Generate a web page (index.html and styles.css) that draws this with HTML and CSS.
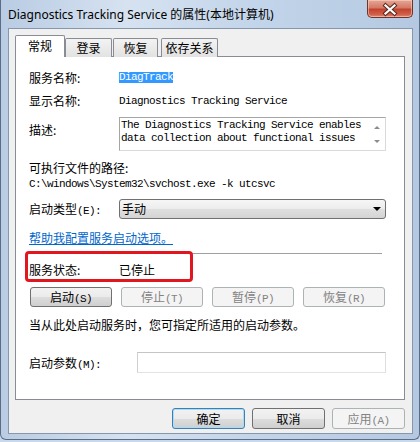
FILE: index.html
```html
<!DOCTYPE html>
<html lang="zh-CN">
<head>
  <meta charset="UTF-8">
  <title>Diagnostics Tracking Service 的属性(本地计算机)</title>
  <link rel="stylesheet" href="styles.css">
</head>
<body>
  <div class="window">
    <div class="titlebar">
      <span class="title">Diagnostics Tracking Service 的属性(本地计算机)</span>
      <button class="close" aria-label="关闭">
        <svg width="44" height="16" viewBox="0 0 44 16">
          <path d="M17.5 4.5 L26.5 12.5 M26.5 4.5 L17.5 12.5" stroke="#5a2b24" stroke-width="4.2" stroke-linecap="square"/>
          <path d="M17.5 4.5 L26.5 12.5 M26.5 4.5 L17.5 12.5" stroke="#ffffff" stroke-width="2.2" stroke-linecap="square"/>
        </svg>
      </button>
    </div>

    <div class="client">
      <div class="tabs">
        <div class="tab active t-general">常规</div>
        <div class="tab t-logon">登录</div>
        <div class="tab t-recovery">恢复</div>
        <div class="tab t-deps">依存关系</div>
      </div>

      <div class="panel">
        <div class="field">
          <span class="label">服务名称:</span>
          <span class="mono"><span class="selected">DiagTrack</span></span>
        </div>
        <div class="field gap-3">
          <span class="label">显示名称:</span>
          <span class="mono">Diagnostics Tracking Service</span>
        </div>
        <div class="field desc">
          <span class="label">描述:</span>
          <div class="textbox">
            <div class="text mono">The Diagnostics Tracking Service enables<br>data collection about functional issues</div>
            <div class="scroll">
              <span class="arrow-up"></span>
              <span class="arrow-down"></span>
            </div>
          </div>
        </div>
        <div class="heading">可执行文件的路径:</div>
        <div class="path mono">C:\windows\System32\svchost.exe -k utcsvc</div>
        <div class="field startup">
          <span class="label">启动类型<span class="mono">(E):</span></span>
          <div class="combo">
            <span>手动</span>
            <span class="combo-arrow"></span>
          </div>
        </div>
        <a class="help" href="#">帮助我配置服务启动选项。</a>
        <div class="separator"></div>
        <div class="field status">
          <span class="label">服务状态:</span>
          <span>已停止</span>
          <div class="mark"></div>
        </div>
        <div class="buttons">
          <button class="btn">启动<span class="mono">(S)</span></button>
          <button class="btn" disabled>停止<span class="mono">(T)</span></button>
          <button class="btn" disabled>暂停<span class="mono">(P)</span></button>
          <button class="btn" disabled>恢复<span class="mono">(R)</span></button>
        </div>
        <div class="note">当从此处启动服务时，您可指定所适用的启动参数。</div>
        <div class="field params">
          <span class="label wide">启动参数<span class="mono">(M):</span></span>
          <div class="input"></div>
        </div>
      </div>

      <div class="actions">
        <button class="btn small default">确定</button>
        <button class="btn small">取消</button>
        <button class="btn small" disabled>应用<span class="mono">(A)</span></button>
      </div>
    </div>
  </div>
</body>
</html>
```

FILE: styles.css
```css
* {
  box-sizing: border-box;
}
body {
  margin: 0;
  width: 420px;
  height: 442px;
  overflow: hidden;
  font-family: "Noto Sans CJK SC", sans-serif;
  font-size: 12px;
  color: #000;
  background: #c9d8ea;
}
.window {
  width: 420px;
  height: 440px;
  border: 1px solid #5a6d85;
  border-top: none;
  border-radius: 0 0 6px 6px;
  background: linear-gradient(90deg, #b9cce3 0%, #d6e2f0 30%, #c3d5ea 60%, #b4c9e1 100%);
}
.titlebar {
  display: flex;
  justify-content: space-between;
  align-items: flex-start;
  height: 28px;
  padding-right: 6px;
}
.title {
  padding: 6px 0 0 7px;
  line-height: 18px;
  font-family: "Noto Sans", "Noto Sans CJK SC", sans-serif;
  font-size: 12px;
  color: #000;
}
.close {
  width: 46px;
  height: 18px;
  padding: 0;
  border: 1px solid #6e3329;
  border-top: none;
  border-radius: 0 0 5px 5px;
  background: linear-gradient(#e6a796 0%, #d47a66 45%, #c2432e 55%, #d0604a 85%, #e08c72 100%);
  box-shadow: inset 0 0 0 1px rgba(255, 220, 210, 0.5);
}
.close svg {
  display: block;
}
.client {
  width: 405px;
  height: 406px;
  margin-left: 7px;
  border: 1px solid #8797ab;
  background: #f0f0f0;
  padding: 6px 0 0 6px;
}
.tabs {
  display: flex;
  align-items: flex-end;
  height: 22px;
}
.tab {
  height: 19px;
  border: 1px solid #898c95;
  border-bottom: none;
  border-radius: 2px 2px 0 0;
  background: linear-gradient(#f3f3f3, #e2e2e2);
  text-align: center;
  line-height: 18px;
}
.tab.active {
  height: 22px;
  line-height: 20px;
  background: #fff;
  position: relative;
  z-index: 1;
}
.t-general { width: 50px; }
.t-logon { width: 47px; }
.t-recovery { width: 45px; margin-left: 1px; }
.t-deps { width: 57px; margin-left: 3px; }
.panel {
  width: 390px;
  height: 344px;
  margin-top: -1px;
  border: 1px solid #898c95;
  background: #fff;
  padding: 11px 18px 0 13px;
}
.mono {
  font-family: "Liberation Mono", monospace;
  font-size: 11px;
  letter-spacing: -0.6px;
}
.field {
  display: flex;
  height: 20px;
  line-height: 20px;
}
.label {
  width: 90px;
  flex: none;
}
.label.wide {
  width: 108px;
}
.selected {
  display: inline-block;
  line-height: 11px;
  background: #3399ff;
  color: #fff;
  vertical-align: 1px;
}
.gap-3 {
  margin-top: 3px;
}
.desc {
  height: 34px;
  margin-top: 6px;
}
.desc .label {
  padding-top: 3px;
}
.textbox {
  display: flex;
  width: 267px;
  height: 34px;
  border: 1px solid;
  border-color: #a5a5a5 #dadada #dadada #a5a5a5;
}
.textbox .text {
  flex: 1;
  padding: 1px 1px;
  line-height: 13px;
}
.scroll {
  width: 17px;
  display: flex;
  flex-direction: column;
  justify-content: space-between;
  align-items: center;
  padding: 8px 0 7px;
}
.arrow-up {
  border-left: 3px solid transparent;
  border-right: 3px solid transparent;
  border-bottom: 3px solid #8c8c8c;
}
.arrow-down {
  border-left: 3px solid transparent;
  border-right: 3px solid transparent;
  border-top: 3px solid #8c8c8c;
}
.heading {
  margin-top: 8px;
  line-height: 17px;
}
.path {
  line-height: 16px;
}
.startup {
  margin-top: 7px;
}
.combo {
  display: flex;
  justify-content: space-between;
  align-items: center;
  width: 267px;
  height: 20px;
  padding: 0 4px 0 2px;
  border: 1px solid #707070;
  border-radius: 3px;
  background: linear-gradient(#f6f6f6 0%, #ececec 50%, #dfdfdf 51%, #d4d4d4 100%);
}
.combo-arrow {
  border-left: 4px solid transparent;
  border-right: 4px solid transparent;
  border-top: 4px solid #000;
}
.help {
  display: block;
  margin-top: 9px;
  line-height: 20px;
  color: #0066cc;
  text-decoration: underline;
}
.separator {
  margin-top: 5px;
  width: 353px;
  height: 1px;
  background: #a0a0a0;
}
.status {
  margin-top: 6px;
  position: relative;
}
.mark {
  position: absolute;
  top: -9px;
  left: -4px;
  width: 168px;
  height: 31px;
  border: 3px solid #e2161e;
  border-radius: 4px;
}
.buttons {
  display: flex;
  gap: 9px;
  margin-top: 7px;
  padding-left: 1px;
}
.btn {
  width: 82px;
  height: 20px;
  padding: 0;
  font: inherit;
  line-height: 18px;
  color: #000;
  text-align: center;
  border: 1px solid #707070;
  border-radius: 3px;
  background: linear-gradient(#f2f2f2 0%, #ebebeb 50%, #dddddd 51%, #cfcfcf 100%);
}
.btn:disabled {
  color: #838383;
  border-color: #adb2b5;
  background: #f4f4f4;
}
.note {
  margin-top: 8px;
  line-height: 20px;
}
.params {
  margin-top: 17px;
  height: 21px;
  line-height: 21px;
}
.input {
  width: 249px;
  height: 21px;
  border: 1px solid;
  border-color: #c5c5c5 #dedede #e3e3e3 #d0d0d0;
  background: #fff;
}
.actions {
  display: flex;
  justify-content: flex-end;
  gap: 7px;
  width: 390px;
  margin-top: 8px;
}
.btn.small {
  width: 73px;
  height: 21px;
  line-height: 19px;
}
.btn.default {
  border-color: #3c7fb1;
  box-shadow: inset 0 0 0 1px #a8dcf7;
}
```
